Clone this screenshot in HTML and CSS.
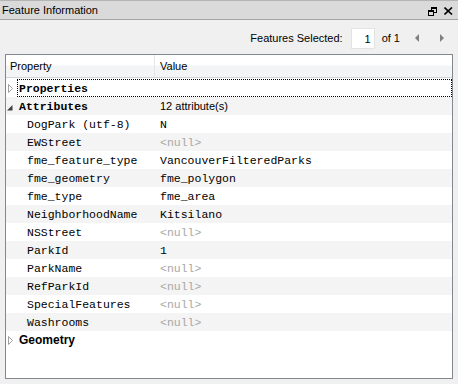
FILE: index.html
```html
<!DOCTYPE html>
<html lang="en">
<head>
    <meta charset="UTF-8">
    <title>Feature Information</title>
    <link rel="stylesheet" href="styles.css">
</head>
<body>

    <!-- Title bar -->
    <div class="titlebar">
        <span class="title">Feature Information</span>
        <div class="win-buttons">
            <svg class="restore" width="9" height="9" viewBox="0 0 9 9">
                <rect x="3" y="0" width="6" height="2"/>
                <rect x="3" y="0" width="1" height="3"/>
                <rect x="8" y="0" width="1" height="6"/>
                <rect x="6" y="5" width="3" height="1"/>
                <rect x="0" y="3" width="6" height="2"/>
                <rect x="0" y="3" width="1" height="6"/>
                <rect x="5" y="3" width="1" height="6"/>
                <rect x="0" y="8" width="6" height="1"/>
            </svg>
            <svg class="close" width="9" height="8" viewBox="0 0 9 8">
                <path d="M0.5 0.5 L8 7.5 M8 0.5 L0.5 7.5"/>
            </svg>
        </div>
    </div>

    <!-- Toolbar -->
    <div class="toolbar">
        <span>Features Selected:</span>
        <span class="count">1</span>
        <span class="of">of 1</span>
        <svg class="nav prev" width="4" height="8" viewBox="0 0 4 8"><path d="M4 0 L0 4 L4 8 Z"/></svg>
        <svg class="nav next" width="4" height="8" viewBox="0 0 4 8"><path d="M0 0 L4 4 L0 8 Z"/></svg>
    </div>

    <!-- Tree grid -->
    <div class="grid">
        <div class="header">
            <div class="col-prop">Property</div>
            <div class="col-val">Value</div>
        </div>

        <div class="row group">
            <span class="twisty"><svg width="5" height="9" viewBox="0 0 5 9"><path class="closed" d="M0.5 0.5 L4.5 4.5 L0.5 8.5 Z"/></svg></span>
            <span class="gname mono focus">Properties</span>
        </div>

        <div class="row group alt">
            <span class="twisty open"><svg width="6" height="6" viewBox="0 0 6 6"><path d="M5.5 0 L5.5 5.5 L0 5.5 Z"/></svg></span>
            <span class="gname mono">Attributes</span>
            <span class="val">12 attribute(s)</span>
        </div>

        <div class="row"><span class="prop">DogPark (utf-8)</span><span class="val mono">N</span></div>
        <div class="row alt"><span class="prop">EWStreet</span><span class="val mono null">&lt;null&gt;</span></div>
        <div class="row"><span class="prop">fme_feature_type</span><span class="val mono">VancouverFilteredParks</span></div>
        <div class="row alt"><span class="prop">fme_geometry</span><span class="val mono">fme_polygon</span></div>
        <div class="row"><span class="prop">fme_type</span><span class="val mono">fme_area</span></div>
        <div class="row alt"><span class="prop">NeighborhoodName</span><span class="val mono">Kitsilano</span></div>
        <div class="row"><span class="prop">NSStreet</span><span class="val mono null">&lt;null&gt;</span></div>
        <div class="row alt"><span class="prop">ParkId</span><span class="val mono">1</span></div>
        <div class="row"><span class="prop">ParkName</span><span class="val mono null">&lt;null&gt;</span></div>
        <div class="row alt"><span class="prop">RefParkId</span><span class="val mono null">&lt;null&gt;</span></div>
        <div class="row"><span class="prop">SpecialFeatures</span><span class="val mono null">&lt;null&gt;</span></div>
        <div class="row alt"><span class="prop">Washrooms</span><span class="val mono null">&lt;null&gt;</span></div>

        <div class="row group">
            <span class="twisty"><svg width="5" height="9" viewBox="0 0 5 9"><path class="closed" d="M0.5 0.5 L4.5 4.5 L0.5 8.5 Z"/></svg></span>
            <span class="gname sans-bold">Geometry</span>
        </div>
    </div>

</body>
</html>
```

FILE: styles.css
```css
/* Base */
* { margin: 0; padding: 0; box-sizing: border-box; }
body { width: 458px; height: 384px; background: #f0f0f0; color: #000; font-family: "Liberation Sans", Arial, sans-serif; font-size: 11px; overflow: hidden; }
.mono { font-family: "Liberation Mono", "Courier New", monospace; font-size: 11.5px; }

/* Title bar */
.titlebar { height: 20px; display: flex; align-items: center; background: #dadada; border-top: 1px solid #b4b4b4; border-bottom: 1px solid #a3a3a3; padding-left: 2px; }
.title { flex: 1; }
.win-buttons { display: flex; align-items: center; padding-right: 5px; margin-top: 2px; }
.restore { fill: #000; shape-rendering: crispEdges; }
.close { margin-left: 7px; stroke: #000; stroke-width: 1.6; fill: none; }

/* Toolbar */
.toolbar { height: 34px; padding-top: 2px; padding-right: 14px; display: flex; justify-content: flex-end; align-items: center; }
.count { width: 24px; height: 21px; margin-left: 8px; background: #fff; border: 1px solid #e3e3e3; text-align: right; padding-right: 3px; line-height: 20px; }
.of { margin-left: 7px; }
.nav { fill: #808080; }
.prev { margin-left: 15px; }
.next { margin-left: 21px; }

/* Grid */
.grid { width: 448px; height: 325px; margin-left: 5px; background: #fff; border: 1px solid #828790; }
.header { display: flex; height: 23px; border-bottom: 1px solid #d5d5d5; margin-bottom: 1px; background: linear-gradient(#fff 0, #fff 45%, #f3f4f6 50%, #f3f4f6 100%); }
.header > div { line-height: 22px; }
.col-prop { width: 149px; padding-left: 4px; border-right: 1px solid #e5e5e5; }
.col-val { padding-left: 5px; }

.row { display: flex; align-items: center; height: 18px; padding-top: 1px; }
.row.alt { background: #f4f4f4; }
.prop { width: 149px; padding-left: 21px; font-family: "Liberation Mono", "Courier New", monospace; font-size: 11.5px; }
.val { padding-left: 5px; }
.null { color: #a8a8a8; }

.group { padding-top: 0; }
.twisty { width: 11px; height: 18px; padding-left: 2px; display: flex; align-items: center; }
.twisty.open { padding-left: 1px; padding-top: 3px; }
.twisty .closed { fill: #fff; stroke: #a0a0a0; stroke-width: 1; }
.twisty.open path { fill: #404040; }
.gname { height: 18px; line-height: 17px; padding-left: 1px; border: 1px dotted transparent; font-weight: bold; }
.group .gname { width: 138px; }
.gname.focus { flex: 1; border-color: #000; }
.sans-bold { font-family: "Liberation Sans", Arial, sans-serif; font-size: 12px; }
```
